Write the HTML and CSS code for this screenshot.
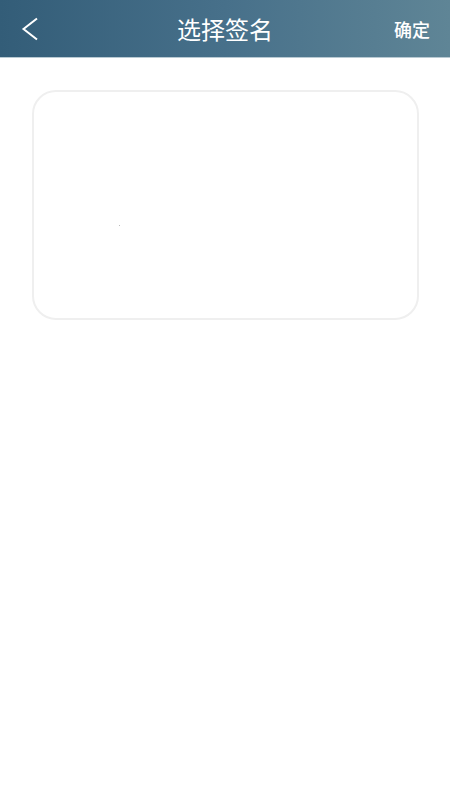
FILE: index.html
```html
<!DOCTYPE html>
<html lang="zh">
<head>
<meta charset="utf-8">
<title>选择签名</title>
<link rel="stylesheet" href="styles.css">
</head>
<body>
<header class="bar">
  <button class="back" aria-label="返回">
    <svg width="18" height="24" viewBox="0 0 18 24"><path d="M16 1.5 L2.5 12 L16 22.5" fill="none" stroke="#fff" stroke-width="2"/></svg>
  </button>
  <h1 class="title">选择签名</h1>
  <button class="ok">确定</button>
</header>
<main class="content">
  <div class="pad"><span class="dot"></span></div>
</main>
</body>
</html>
```
FILE: styles.css
```css
* { box-sizing: border-box; }
html, body { margin: 0; padding: 0; background: #fff; }
body { font-family: "Noto Sans CJK SC", "Noto Sans", sans-serif; width: 450px; height: 800px; }
.bar {
  height: 58px;
  background: linear-gradient(90deg, #335d78 0%, #47708a 50%, #5f8596 100%);
  border-bottom: 1px solid #b9cad3;
  display: flex;
  align-items: center;
  justify-content: space-between;
  padding: 0 20px 0 21px;
  position: relative;
}
.back { background: none; border: 0; padding: 0; width: 20px; height: 26px; display: flex; align-items: center; cursor: pointer; }
.title {
  position: absolute; left: 0; right: 0; top: 0; bottom: 0;
  margin: 0; display: flex; align-items: center; justify-content: center;
  color: #fff; font-size: 24px; font-weight: 400; pointer-events: none;
}
.ok { background: none; border: 0; padding: 0; color: #fff; font-size: 18px; font-weight: 500; font-family: inherit; cursor: pointer; }
.content { padding: 32px 31px 0 32px; }
.pad {
  height: 230px;
  border: 2px solid #efefef;
  border-radius: 24px;
  position: relative;
}
.dot { position: absolute; left: 85px; top: 133px; width: 1px; height: 1px; background: #bbb; }
```
